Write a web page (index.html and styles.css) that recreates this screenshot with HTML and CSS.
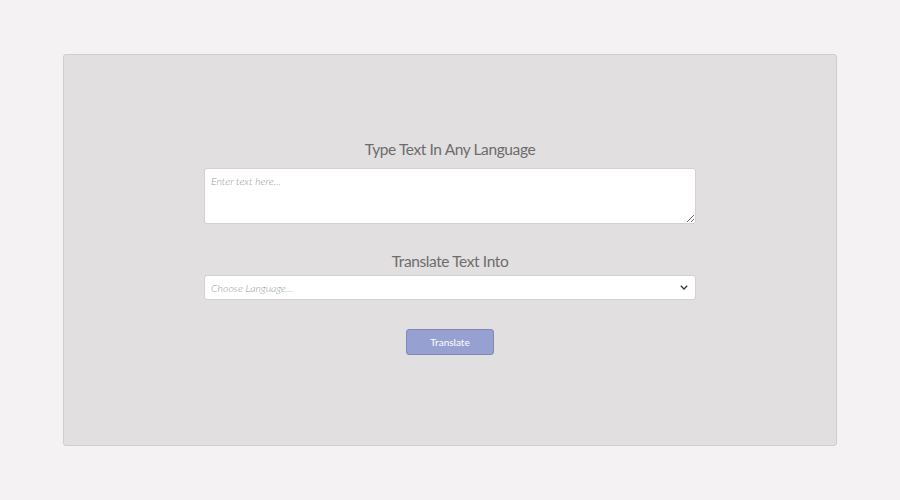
FILE: index.html
```html
<!DOCTYPE html>
<html lang="en">
<head>
<meta charset="utf-8">
<title>Translator</title>
<link rel="stylesheet" href="styles.css">
</head>
<body>
<main class="card">
  <form class="form">
    <label class="heading" for="src">Type Text In Any Language</label>
    <textarea id="src" class="input-text" placeholder="Enter text here..."></textarea>
    <label class="heading heading-2" for="lang">Translate Text Into</label>
    <div class="select-wrap">
      <select id="lang" class="select">
        <option selected disabled>Choose Language...</option>
        <option>English</option>
        <option>French</option>
      </select>
      <svg class="chev" width="8" height="5" viewBox="0 0 8 5"><path d="M0.8 0.8 L4 4 L7.2 0.8" fill="none" stroke="#333" stroke-width="1.3"/></svg>
    </div>
    <button type="button" class="btn">Translate</button>
  </form>
</main>
</body>
</html>
```
FILE: styles.css
```css
html, body {
  margin: 0;
  padding: 0;
}
body {
  background: #f4f2f3;
  font-family: "Lato", "Noto Sans", sans-serif;
  width: 900px;
  height: 500px;
  padding-top: 54px;
  box-sizing: border-box;
}
.card {
  box-sizing: border-box;
  width: 774px;
  height: 392px;
  margin-left: 63px;
  background: #e1dfe0;
  border: 1px solid #cfcdce;
  border-radius: 3px;
  display: flex;
  justify-content: center;
  padding-top: 83px;
}
.form {
  width: 492px;
  display: flex;
  flex-direction: column;
  align-items: center;
}
.heading {
  font-size: 15.5px;
  letter-spacing: -0.4px;
  line-height: 22px;
  color: #6e6c6d;
  margin-bottom: 8px;
}
.heading-2 {
  margin-top: 26px;
  margin-bottom: 3px;
}
.input-text {
  box-sizing: border-box;
  width: 492px;
  height: 56px;
  margin: 0;
  border: 1px solid #d2d0d1;
  border-radius: 3px;
  background: #fff;
  padding: 6px 6px;
  font-family: "Lato", sans-serif;
  font-weight: 300;
  font-size: 10.5px;
  resize: vertical;
  outline: none;
}
.input-text::placeholder {
  color: #999798;
  font-style: italic;
}
.select-wrap {
  position: relative;
  width: 492px;
  height: 25px;
}
.select {
  box-sizing: border-box;
  width: 100%;
  height: 25px;
  margin: 0;
  appearance: none;
  -webkit-appearance: none;
  border: 1px solid #d2d0d1;
  border-radius: 3px;
  background: #fff;
  padding: 0 6px;
  font-family: "Lato", sans-serif;
  font-weight: 300;
  font-size: 10.5px;
  font-style: italic;
  color: #999798;
  outline: none;
}
.chev {
  position: absolute;
  right: 8px;
  top: 10px;
}
.btn {
  margin-top: 29px;
  box-sizing: border-box;
  width: 88px;
  height: 26px;
  background: #97a1d1;
  border: 1px solid #7f89b8;
  border-radius: 3px;
  color: #fff;
  font-family: "Lato", sans-serif;
  font-size: 10px;
  padding: 0;
}
```
